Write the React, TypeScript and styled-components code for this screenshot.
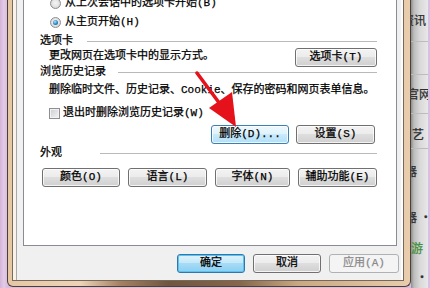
import React from "react";
import styled, { createGlobalStyle, css } from "styled-components";

const FONT = `"Liberation Mono", "Noto Sans CJK SC", monospace`;

const Global = createGlobalStyle`
  html, body { margin: 0; padding: 0; background: #dcc4e0; }
  body { width: 430px; height: 288px; overflow: hidden; }
`;

const Screen = styled.div`
  position: relative;
  width: 430px;
  height: 288px;
  overflow: hidden;
  display: flex;
  align-items: flex-start;
  background: linear-gradient(to right, #d2b5d9 0, #e3cce7 4px, #d8bddf 7px);
  font-family: ${FONT};
  font-size: 11px;
  color: #000;
  -webkit-text-stroke: 0.25px currentColor;
`;

const Frame = styled.div`
  margin-left: 7px;
  width: 404px;
  height: 287px;
  flex-shrink: 0;
  box-sizing: border-box;
  border: 1px solid #4a4037;
  border-top: none;
  border-radius: 0 0 6px 6px;
  padding: 0 6px 5px 4px;
  display: flex;
  background: linear-gradient(
    to right,
    #e6c7a4 0%,
    #edd4b6 18%,
    #a58062 28%,
    #6f563f 40%,
    #86684c 58%,
    #c9a781 72%,
    #e9cdac 100%
  );
`;

const Client = styled.div`
  width: 392px;
  height: 281px;
  box-sizing: border-box;
  border: 1px solid #76685a;
  border-top: none;
  background: #f0f0f0;
  box-shadow: inset 3px 0 0 #f8f2ea, inset 4px 0 0 #a9a9a9, inset -2px 0 0 #fbfbfb;
  padding: 0 4px 7px 10px;
  display: flex;
  flex-direction: column;
`;

const Panel = styled.div`
  flex: 1 1 auto;
  min-height: 0;
  margin: -7px 2px 0 0;
  box-sizing: border-box;
  border: 1px solid #898c95;
  background: #fff;
  padding: 0 19px 0 16px;
  display: flex;
  flex-direction: column;
  white-space: nowrap;
`;

const RadioRow = styled.div<{ $mt: number }>`
  display: flex;
  align-items: center;
  gap: 4px;
  height: 18px;
  margin: ${(p) => p.$mt}px 0 0 10px;
  line-height: 14px;
`;

const RadioDot = styled.span<{ $on?: boolean }>`
  width: 11px;
  height: 11px;
  box-sizing: border-box;
  flex-shrink: 0;
  border-radius: 50%;
  border: 1px solid #8b8d8f;
  background: radial-gradient(circle at 50% 45%, #f6f6f6 0, #e2e2e2 55%, #c4c6c8 100%);
  display: flex;
  align-items: center;
  justify-content: center;
  ${(p) =>
    p.$on &&
    css`
      &::after {
        content: "";
        width: 5px;
        height: 5px;
        border-radius: 50%;
        background: radial-gradient(circle at 40% 35%, #a9e4ff 0, #2a86c4 55%, #0f4f80 100%);
      }
    `}
`;

const GroupHead = styled.div<{ $mt: number; $gap: number }>`
  display: flex;
  align-items: center;
  height: 10px;
  line-height: 10px;
  margin-top: ${(p) => p.$mt}px;
  &::after {
    content: "";
    flex: 1;
    height: 1px;
    background: #b9b9b9;
    margin-left: ${(p) => p.$gap}px;
  }
`;

const SplitRow = styled.div<{ $mt: number }>`
  display: flex;
  justify-content: space-between;
  align-items: flex-start;
  height: 19px;
  margin-top: ${(p) => p.$mt}px;
`;

const Desc = styled.div<{ $mt: number }>`
  margin: ${(p) => p.$mt}px 0 0 9px;
  line-height: 14px;
`;

const CheckRow = styled.div<{ $mt: number }>`
  display: flex;
  align-items: center;
  gap: 3px;
  height: 14px;
  margin: ${(p) => p.$mt}px 0 0 9px;
  line-height: 14px;
`;

const CheckBox = styled.span`
  width: 11px;
  height: 11px;
  flex-shrink: 0;
  box-sizing: border-box;
  border: 1px solid #8e8f8f;
  background: linear-gradient(135deg, #c9cdd3 0%, #e4e5e7 60%, #f6f6f6 100%);
  box-shadow: inset 0 0 0 1px #f2f2f2;
`;

const ButtonRow = styled.div<{ $mt: number; $justify?: string; $gap: number; $ml?: number; $mr?: number }>`
  display: flex;
  justify-content: ${(p) => p.$justify ?? "flex-start"};
  gap: ${(p) => p.$gap}px;
  margin: ${(p) => p.$mt}px ${(p) => p.$mr ?? 0}px 0 ${(p) => p.$ml ?? 0}px;
  height: 19px;
  flex-shrink: 0;
`;

type Variant = "normal" | "hot" | "default" | "disabled";

const Btn = styled.button<{ $w: number; $variant?: Variant }>`
  width: ${(p) => p.$w}px;
  height: 19px;
  flex-shrink: 0;
  box-sizing: border-box;
  margin: 0;
  padding: 0;
  font-family: ${FONT};
  font-size: 11px;
  line-height: 17px;
  color: #000;
  -webkit-text-stroke: 0.25px currentColor;
  white-space: nowrap;
  border: 1px solid #707070;
  border-radius: 3px;
  background: linear-gradient(#f3f3f3 0%, #ececec 45%, #dedede 50%, #d0d0d0 100%);
  box-shadow: inset 0 0 0 1px rgba(255, 255, 255, 0.75);
  ${(p) =>
    p.$variant === "hot" &&
    css`
      border-color: #3c7fb1;
      background: linear-gradient(#eef8fd 0%, #e0f3fc 45%, #c8eafc 50%, #b4dff6 100%);
    `}
  ${(p) =>
    p.$variant === "default" &&
    css`
      border-color: #2f78ad;
      background: linear-gradient(#dff3fd 0%, #c3e8fa 45%, #a6dbf6 50%, #8ccff1 100%);
      box-shadow: inset 0 0 0 1px #5cc3f0;
    `}
  ${(p) =>
    p.$variant === "disabled" &&
    css`
      border-color: #adb2b5;
      background: #f4f4f4;
      color: #8a8a8a;
      box-shadow: none;
    `}
`;

const Backdrop = styled.div`
  width: 19px;
  height: 288px;
  flex-shrink: 0;
  box-sizing: border-box;
  border-right: 2px solid #d8bfe1;
  overflow: hidden;
  display: flex;
  flex-direction: column;
  background: linear-gradient(to right, #8e8e8e 0, #bdbdbd 3px, #d9d9d9 9px, #e8e8e8 100%);
  font-family: "Noto Sans CJK SC", sans-serif;
  font-size: 12px;
  color: #2e2e2e;
  white-space: nowrap;
`;

const BackText = styled.div<{ $mt: number; $ml: number; $color?: string }>`
  margin: ${(p) => p.$mt}px 0 0 ${(p) => p.$ml}px;
  line-height: 14px;
  height: 14px;
  color: ${(p) => p.$color ?? "#2e2e2e"};
`;

const BackRule = styled.div<{ $mt: number }>`
  margin-top: ${(p) => p.$mt}px;
  height: 1px;
  flex-shrink: 0;
  background: #bcbcbc;
`;

const Arrow = styled.svg`
  position: absolute;
  left: 195px;
  top: 70px;
  width: 45px;
  height: 60px;
  pointer-events: none;
`;

export default function App() {
  return (
    <>
      <Global />
      <Screen>
        <Frame>
          <Client>
            <Panel>
              <RadioRow $mt={0}>
                <RadioDot />
                <span>从上次会话中的选项卡开始(B)</span>
              </RadioRow>
              <RadioRow $mt={1}>
                <RadioDot $on />
                <span>从主页开始(H)</span>
              </RadioRow>

              <GroupHead $mt={5} $gap={14}>选项卡</GroupHead>
              <SplitRow $mt={2}>
                <Desc $mt={1}>更改网页在选项卡中的显示方式。</Desc>
                <Btn $w={82}>选项卡(T)</Btn>
              </SplitRow>

              <GroupHead $mt={0} $gap={12}>浏览历史记录</GroupHead>
              <Desc $mt={6}>删除临时文件、历史记录、Cookie、保存的密码和网页表单信息。</Desc>
              <CheckRow $mt={9}>
                <CheckBox />
                <span>退出时删除浏览历史记录(W)</span>
              </CheckRow>
              <ButtonRow $mt={5} $justify="flex-end" $gap={7} $mr={2}>
                <Btn $w={78} $variant="hot">删除(D)...</Btn>
                <Btn $w={79}>设置(S)</Btn>
              </ButtonRow>

              <GroupHead $mt={4} $gap={38}>外观</GroupHead>
              <ButtonRow $mt={10} $gap={8} $ml={2}>
                <Btn $w={78}>颜色(O)</Btn>
                <Btn $w={79}>语言(L)</Btn>
                <Btn $w={75}>字体(N)</Btn>
                <Btn $w={79}>辅助功能(E)</Btn>
              </ButtonRow>
            </Panel>

            <ButtonRow $mt={8} $justify="flex-end" $gap={8}>
              <Btn $w={68} $variant="default">确定</Btn>
              <Btn $w={68}>取消</Btn>
              <Btn $w={70} $variant="disabled">应用(A)</Btn>
            </ButtonRow>
          </Client>
        </Frame>

        <Backdrop>
          <BackText $mt={13} $ml={-9}>资讯</BackText>
          <BackRule $mt={14} />
          <BackRule $mt={32} />
          <BackText $mt={12} $ml={-4}>官网</BackText>
          <BackRule $mt={12} />
          <BackText $mt={13} $ml={1}>艺</BackText>
          <BackRule $mt={7} />
          <BackText $mt={15} $ml={-6}>器</BackText>
          <BackText $mt={32} $ml={-6}>器 •</BackText>
          <BackText $mt={17} $ml={0} $color="#3f8f3a">游</BackText>
          <BackText $mt={15} $ml={5}>• 乐</BackText>
        </Backdrop>

        <Arrow viewBox="0 0 45 60">
          <line x1="2" y1="3" x2="25" y2="34" stroke="#e5121b" strokeWidth="3.5" strokeLinecap="round" />
          <polygon points="14,38 37,22 41,57" fill="#e5121b" />
        </Arrow>
      </Screen>
    </>
  );
}
